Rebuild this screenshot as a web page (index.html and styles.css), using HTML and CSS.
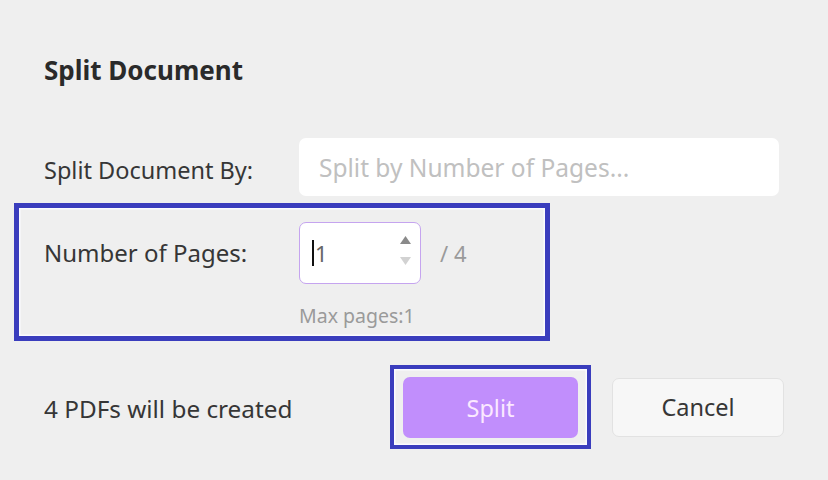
FILE: index.html
```html
<!DOCTYPE html>
<html>
<head>
<meta charset="utf-8">
<link rel="stylesheet" href="styles.css">
</head>
<body>
<div class="dialog">
  <h1 class="title">Split Document</h1>
  <div class="row row-by">
    <div class="label label-by">Split Document By:</div>
    <div class="select">Split by Number of Pages...</div>
  </div>
  <div class="highlight">
    <div class="row row-pages">
      <div class="label label-pages">Number of Pages:</div>
      <div class="num">
        <span class="caret"></span><span class="val">1</span>
        <div class="spin">
          <svg class="up" width="11" height="8" viewBox="0 0 11 8"><path d="M5.5 0 L11 8 L0 8 Z" fill="#8a8a8a"/></svg>
          <svg class="down" width="11" height="8" viewBox="0 0 11 8"><path d="M0 0 L11 0 L5.5 8 Z" fill="#d2d2d2"/></svg>
        </div>
      </div>
      <div class="total">/ 4</div>
    </div>
    <div class="max">Max pages:1</div>
  </div>
  <div class="footer">
    <div class="info">4 PDFs will be created</div>
    <div class="split-focus"><button class="btn btn-split">Split</button></div>
    <button class="btn btn-cancel">Cancel</button>
  </div>
</div>
</body>
</html>
```
FILE: styles.css
```css
html, body {
  margin: 0;
  padding: 0;
  background: #efefef;
  width: 828px;
  height: 480px;
  overflow: hidden;
}
.dialog {
  font-family: "Noto Sans", "Open Sans", sans-serif;
  color: #363636;
  padding-top: 54px;
}
.title {
  margin: 0 0 0 44px;
  font-size: 26px;
  font-weight: 700;
  line-height: 32px;
  color: #2a2a2a;
}
.row {
  display: flex;
  align-items: center;
}
.row-by {
  margin-top: 52px;
  padding-left: 44px;
}
.label {
  width: 255px;
  font-size: 23.5px;
  line-height: 32px;
  color: #363636;
}
.label-by {
  padding-top: 5px;
}
.label-pages {
  font-size: 24px;
}
.select {
  width: 480px;
  height: 58px;
  box-sizing: border-box;
  background: #fff;
  border-radius: 7px;
  padding-left: 20px;
  display: flex;
  align-items: center;
  font-size: 24.5px;
  color: #c0c0c0;
}
.highlight {
  margin: 7px 0 0 14px;
  width: 536px;
  height: 138px;
  box-sizing: border-box;
  border: 5px solid #3a3dbd;
  box-shadow: inset 0 0 0 1.5px #fbfbff;
  padding: 14px 0 0 25px;
}
.num {
  width: 122px;
  height: 62px;
  box-sizing: border-box;
  background: #fff;
  border: 1.5px solid #c5a4ef;
  border-radius: 7px;
  position: relative;
  display: flex;
  align-items: center;
  padding-left: 12px;
  font-size: 22px;
  color: #333;
}
.caret {
  width: 2px;
  height: 26px;
  background: #111;
  margin-right: 1px;
}
.val {
  color: #666;
}
.spin {
  position: absolute;
  right: 9px;
  top: 13px;
  display: flex;
  flex-direction: column;
  gap: 13px;
}
.spin svg {
  display: block;
}
.total {
  margin-left: 19px;
  font-size: 22px;
  color: #9a9a9a;
}
.max {
  margin: 20px 0 0 255px;
  font-size: 19.5px;
  line-height: 24px;
  color: #9a9a9a;
}
.footer {
  display: flex;
  align-items: center;
  margin-top: 24px;
  padding-left: 44px;
}
.info {
  width: 346px;
  font-size: 24.3px;
  line-height: 32px;
  padding-top: 3px;
  color: #363636;
}
.split-focus {
  width: 201px;
  height: 84px;
  box-sizing: border-box;
  border: 4px solid #3a3dbd;
  box-shadow: inset 0 0 0 1.5px #fbfbff;
  padding: 8px 0 0 9px;
}
.btn {
  font-family: "Noto Sans", "Open Sans", sans-serif;
  font-size: 23.5px;
  border-radius: 7px;
  cursor: pointer;
  padding: 0;
}
.btn-split {
  width: 175px;
  height: 61px;
  border: none;
  background: #c18efc;
  color: #fbe9ff;
}
.btn-cancel {
  margin-left: 21px;
  width: 172px;
  height: 59px;
  background: #f7f7f7;
  border: 1.5px solid #e2e2e2;
  color: #363636;
}
```
